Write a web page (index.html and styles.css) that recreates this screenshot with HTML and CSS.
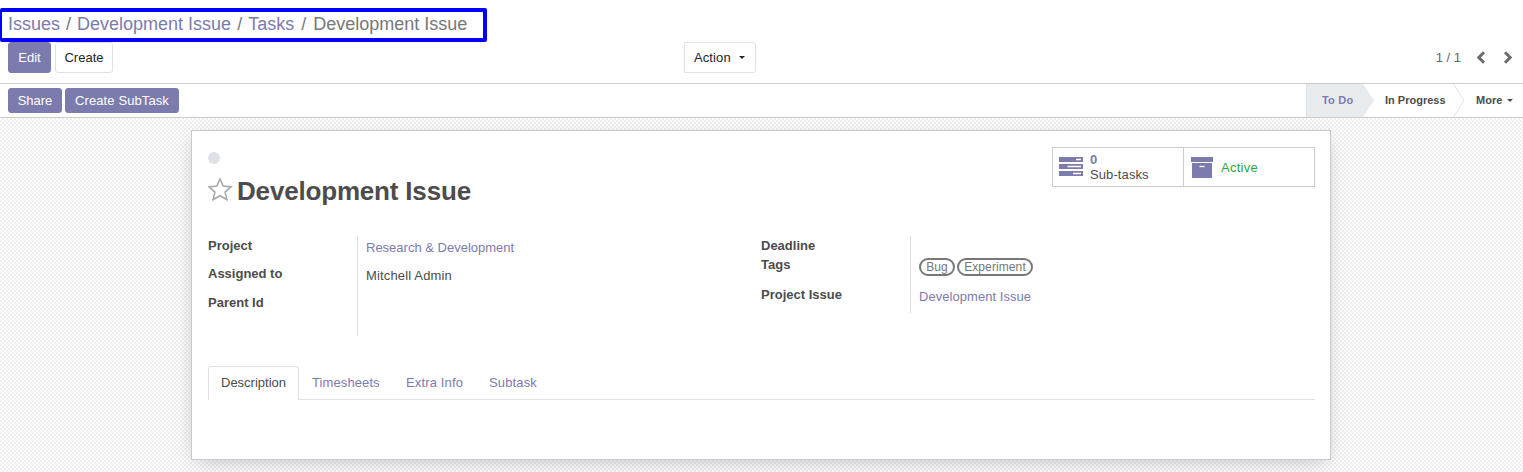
FILE: index.html
```html
<!DOCTYPE html>
<html lang="en">
<head>
<meta charset="utf-8">
<title>Development Issue</title>
<link rel="stylesheet" href="styles.css">
</head>
<body>
<header class="control-panel">
  <nav class="breadcrumb"><a>Issues</a><i>/</i><a>Development Issue</a><i>/</i><a>Tasks</a><i class="last">/</i><span>Development Issue</span></nav>
  <div class="toolbar">
    <div class="buttons"><button class="btn primary edit">Edit</button><button class="btn create">Create</button></div>
    <button class="btn action">Action<b class="caret"></b></button>
    <div class="pager"><span class="count">1 / 1</span>
      <svg class="chev" width="10" height="14" viewBox="0 0 10 14"><path d="M8 1.3 2.800 6.500 8 11.700"/></svg>
      <svg class="chev next" width="10" height="14" viewBox="0 0 10 14"><path d="M2 1.300 7.200 6.500 2 11.700"/></svg>
    </div>
  </div>
</header>
<div class="statusbar">
  <div class="status-buttons"><button class="btn primary share">Share</button><button class="btn primary subtask">Create SubTask</button></div>
  <div class="stages">
    <div class="stage current"><span>To Do</span></div>
    <div class="stage progress"><svg class="arrow filled" width="12" height="33" viewBox="0 0 12 33"><path d="M0 0 11 16.500 0 33z"/></svg><span>In Progress</span><svg class="arrow line" width="12" height="33" viewBox="0 0 12 33"><path d="M.5 0 11 16.500.5 33"/></svg></div>
    <div class="stage more"><span>More</span><b class="caret small"></b></div>
  </div>
</div>
<main class="background">
  <section class="sheet">
    <div class="top">
      <div class="title-block">
        <span class="kanban-dot"></span>
        <div class="title-row">
          <svg width="26" height="24" viewBox="0 0 26 24"><path class="star" d="M12 2 15.100 9.100 23 9.900 17.100 15.100 18.900 22.700 12 18.700 5.100 22.700 6.900 15.100 1 9.900 8.900 9.100z"/></svg>
          <h1>Development Issue</h1>
        </div>
      </div>
      <div class="stat-buttons">
        <div class="stat">
          <svg width="24" height="20" viewBox="0 0 24 20"><path class="solid" d="M0 0h24v5H0zM0 7h24v5H0zM0 14h24v5H0z"/><path class="slot" d="M17 2.500h5M8.500 9.500h13.500M14 16.500h8"/></svg>
          <div class="stat-text"><strong>0</strong><span>Sub-tasks</span></div>
        </div>
        <div class="stat archive">
          <svg width="22" height="21" viewBox="0 0 22 21"><path class="solid" d="M0 0h22v5H0zM1 6h20v15H1z"/><path class="slot" d="M8.500 9.500h5"/></svg>
          <span class="active">Active</span>
        </div>
      </div>
    </div>
    <div class="groups">
      <dl class="group left">
        <dt>Project</dt><dd><a>Research &amp; Development</a></dd>
        <dt>Assigned to</dt><dd><span class="assignee">Mitchell Admin</span></dd>
        <dt>Parent Id</dt><dd></dd>
      </dl>
      <dl class="group right">
        <dt>Deadline</dt><dd></dd>
        <dt>Tags</dt><dd class="tags"><span class="tag bug">Bug</span><span class="tag experiment">Experiment</span></dd>
        <dt>Project Issue</dt><dd><a class="issue-link">Development Issue</a></dd>
      </dl>
    </div>
    <nav class="tabs"><a class="tab selected">Description</a><a class="tab timesheets">Timesheets</a><a class="tab extra">Extra Info</a><a class="tab sub">Subtask</a></nav>
  </section>
</main>
</body>
</html>
```
FILE: styles.css
```css
* { box-sizing: border-box; }
body { margin: 0; height: 472px; overflow: hidden; background: #fff; color: #4c4c4c; font: 13px/20px "Liberation Sans", Arial, sans-serif; display: flex; flex-direction: column; }
a { color: #7c7bad; }
svg { display: block; flex: none; }
.control-panel { height: 84px; padding-top: 8px; border-bottom: 1px solid #ccc; }
.breadcrumb { width: 487px; height: 34px; border: 4px solid #00f; border-left-width: 2px; border-radius: 2px; padding-left: 6px; font-size: 18px; line-height: 24px; color: #777; white-space: nowrap; }
.breadcrumb i { font-style: normal; padding: 0 6px; }
.breadcrumb .last { padding: 0 7px; }
.toolbar { display: grid; grid-template-columns: 676px 1fr auto; padding: 0 10px 0 8px; }
.buttons { display: flex; gap: 4px; }
.btn { height: 31px; padding: 0; border: 1px solid #dee2e6; border-radius: 3px; background: #fff; color: #212529; font: inherit; white-space: nowrap; }
.primary { background: #7c7bad; border-color: #7c7bad; color: #fff; }
.edit { width: 43px; }
.create { width: 58px; }
.action { width: 72px; border-radius: 0 3px 3px 0; display: flex; align-items: center; padding-left: 9px; letter-spacing: .1px; }
.caret { border: 3.5px solid transparent; border-top-color: currentColor; border-bottom: 0; margin-left: 8px; }
.pager { display: flex; align-items: center; color: #666; }
.count { margin-right: 15px; }
.chev { fill: none; stroke: #6c6c70; stroke-width: 3; }
.next { margin-left: 17px; }
.statusbar { height: 34px; border-bottom: 1px solid #ccc; display: flex; justify-content: space-between; padding-left: 8px; }
.status-buttons { display: flex; gap: 3px; padding-top: 4px; }
.status-buttons .btn { height: 25px; }
.share { width: 54px; }
.status-buttons .subtask { width: 114px; letter-spacing: .1px; }
.stages { display: flex; font-size: 11px; font-weight: bold; line-height: 33px; }
.stage { display: flex; }
.current { width: 57px; background: #e9ecef; border-left: 1px solid #dee2e6; color: #7c7bad; padding-left: 15px; letter-spacing: .2px; }
.progress { width: 102px; }
.progress span { margin: 0 7px 0 10px; width: 61px; white-space: nowrap; }
.filled { fill: #e9ecef; }
.line { fill: none; stroke: #dee2e6; }
.more { width: 58px; padding-left: 11px; align-items: center; }
.caret.small { border-width: 3px 3px 0; margin-left: 5px; }
.background { flex: 1; padding: 12px 192px 0 191px; background: repeating-conic-gradient(#eee 0 25%, #fff 0 50%) 0 0 / 4px 4px; }
.sheet { height: 330px; background: #fff; border: 1px solid #c8c8d3; padding: 16px 15px 0 16px; box-shadow: 0 5px 20px -5px rgba(0, 0, 0, .25); }
.top { display: flex; justify-content: space-between; height: 89px; }
.title-block { padding-top: 5px; }
.kanban-dot { display: block; width: 12px; height: 12px; border-radius: 50%; background: #dee2e6; }
.title-row { display: flex; margin-top: 13px; }
.title-row svg { margin-right: 3px; }
.star { fill: none; stroke: #a8a8a8; stroke-width: 1.6; }
h1 { margin: 1px 0 0; font-size: 26px; line-height: 26px; letter-spacing: -.18px; white-space: nowrap; }
.stat-buttons { display: flex; height: 40px; width: 263px; border: 1px solid #ccc; }
.stat { width: 130px; display: flex; align-items: center; padding-left: 6px; gap: 7px; }
.archive { width: 131px; border-left: 1px solid #ccc; padding-left: 7px; gap: 8px; }
.solid { fill: #7c7bad; }
.slot { fill: none; stroke: #fff; stroke-width: 1.3; }
.stat-text { display: flex; flex-direction: column; line-height: 15px; letter-spacing: .1px; }
.stat strong { color: #7c7bad; }
.active { color: #28a745; letter-spacing: .25px; padding-top: 2px; }
.groups { display: grid; grid-template-columns: 553px 1fr; height: 100px; }
.group { margin: 0; display: grid; grid-template-columns: 149px 1fr; line-height: 18px; }
.left { grid-template-rows: 28px 29px 43px; }
.right { grid-template-rows: 19px 30px 28px; height: 77px; }
dt { font-weight: bold; padding-top: 1px; }
dd { margin: 0; border-left: 1px solid #ddd; padding: 3px 0 0 8px; white-space: nowrap; }
.assignee { letter-spacing: .15px; }
.issue-link { letter-spacing: .05px; }
.tags { display: flex; gap: 2px; align-items: start; }
.tag { height: 18px; border: 2px solid #777; border-radius: 9px; font-size: 12px; line-height: 14px; color: #777; text-align: center; }
.bug { width: 36px; }
.experiment { width: 76px; letter-spacing: .1px; }
.tabs { display: flex; margin-top: 30px; height: 34px; border-bottom: 1px solid #dee2e6; line-height: 33px; }
.tab { padding: 0 13px; white-space: nowrap; }
.timesheets { width: 94px; letter-spacing: .1px; }
.extra { width: 83px; letter-spacing: .15px; }
.sub { letter-spacing: .15px; }
.selected { width: 91px; color: #4c4c4c; height: 34px; background: #fff; border: 1px solid #dee2e6; border-bottom: 0; border-radius: 3px 3px 0 0; line-height: 31px; padding: 0 12px; }
```
